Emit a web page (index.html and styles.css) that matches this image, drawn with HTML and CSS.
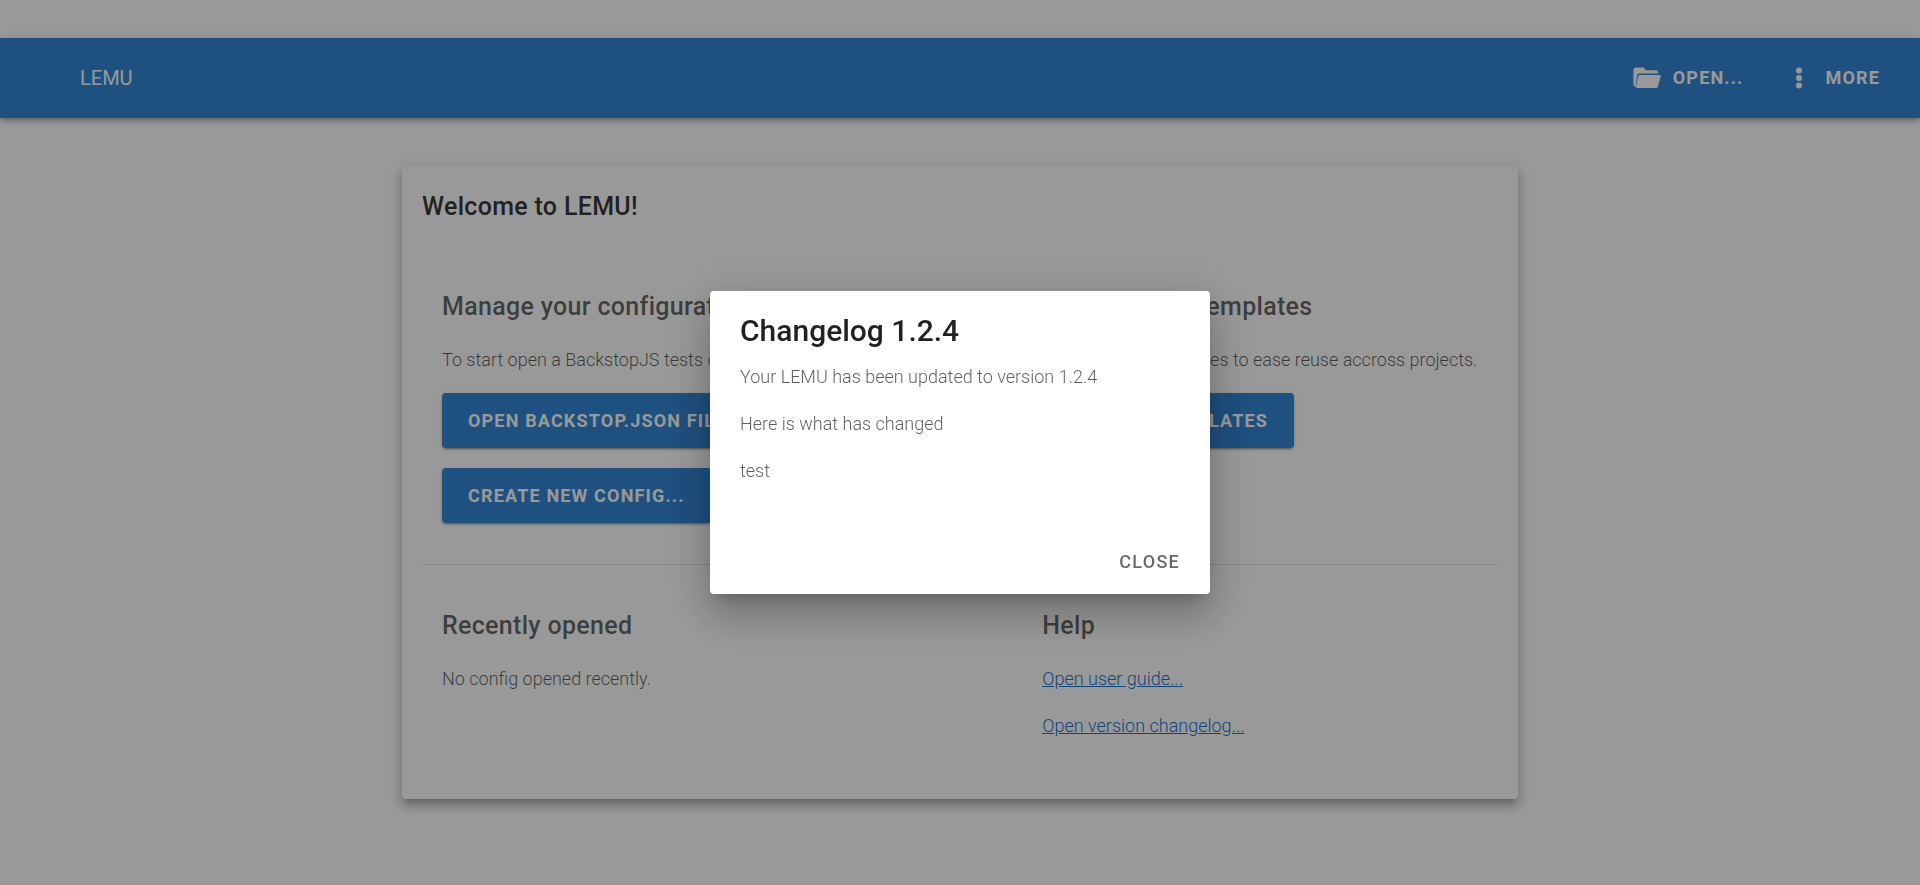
FILE: index.html
```html
<!DOCTYPE html>
<html lang="en">
<head>
<meta charset="utf-8">
<title>LEMU</title>
<link rel="stylesheet" href="styles.css">
</head>
<body>
<header class="toolbar">
  <h1 class="brand">LEMU</h1>
  <nav class="toolbar-actions">
    <button class="tool-button" type="button">
      <svg class="icon" viewBox="0 0 28 28" aria-hidden="true"><g fill="currentColor"><path d="M2.4 3.6H9.6Q11 3.6 11.8 4.8L12.8 6.2H23Q25 6.2 25.2 8.6V9.6H6.4Q4.4 9.6 4 11.6L2.7 23.2Q.6 22.8.4 20.8V5.8Q.5 3.8 2.4 3.6Z"/><path d="M7 11H26.6Q28 11 27.7 12.4L25 22.4Q24.5 24 22.8 24H4.4Q2.9 24 3.1 22.6L5 12.6Q5.4 11 7 11Z"/></g></svg>
      <span>OPEN...</span>
    </button>
    <button class="tool-button" type="button">
      <svg class="icon" viewBox="0 0 28 28" aria-hidden="true"><g fill="currentColor"><circle cx="14" cy="6.5" r="3"/><circle cx="14" cy="14" r="3"/><circle cx="14" cy="21.5" r="3"/></g></svg>
      <span>MORE</span>
    </button>
  </nav>
</header>
<main class="page">
  <section class="card">
    <h2 class="card-title">Welcome to LEMU!</h2>
    <div class="grid grid-top">
      <section class="cell">
        <h3 class="cell-title">Manage your configuration</h3>
        <p class="text">To start open a BackstopJS tests configuration file.</p>
        <div class="buttons">
          <button class="button" type="button">OPEN BACKSTOP.JSON FILE...</button>
          <button class="button" type="button">CREATE NEW CONFIG...</button>
        </div>
      </section>
      <section class="cell">
        <h3 class="cell-title">Manage your templates</h3>
        <p class="text">Manage your templates to ease reuse accross projects.</p>
        <div class="buttons">
          <button class="button" type="button">MANAGE TEMPLATES</button>
        </div>
      </section>
    </div>
    <hr class="divider">
    <div class="grid">
      <section class="cell">
        <h3 class="cell-title">Recently opened</h3>
        <p class="text">No config opened recently.</p>
      </section>
      <section class="cell">
        <h3 class="cell-title">Help</h3>
        <p class="text"><a class="link" href="#guide">Open user guide...</a></p>
        <p class="text"><a class="link" href="#changelog">Open version changelog...</a></p>
      </section>
    </div>
  </section>
</main>
<div class="overlay">
  <div class="dialog" role="dialog" aria-modal="true" aria-labelledby="dialog-title">
    <h2 class="dialog-title" id="dialog-title">Changelog 1.2.4</h2>
    <div class="dialog-body">
      <p class="text">Your LEMU has been updated to version 1.2.4</p>
      <p class="text">Here is what has changed</p>
      <p class="text">test</p>
    </div>
    <div class="dialog-actions">
      <button class="flat-button" type="button">CLOSE</button>
    </div>
  </div>
</div>
</body>
</html>
```
FILE: styles.css
```css
*, *::before, *::after { box-sizing: border-box; }

body {
  margin: 0;
  padding-top: 38px;
  background: #fff;
  color: rgba(0, 0, 0, .87);
  font-family: Roboto, sans-serif;
  font-size: 18px;
  line-height: 27px;
}

h1, h2, h3, p { margin: 0; }

button {
  border: 0;
  background: none;
  font: inherit;
  letter-spacing: .065em;
  cursor: pointer;
}

.toolbar {
  display: flex;
  align-items: center;
  justify-content: space-between;
  height: 80px;
  padding: 0 20px 0 80px;
  background: #3385d5;
  color: #fff;
  box-shadow: 0 2px 4px -1px rgba(0, 0, 0, .2), 0 4px 5px rgba(0, 0, 0, .14), 0 1px 10px rgba(0, 0, 0, .12);
}

.brand { font-size: 20px; font-weight: 400; }

.toolbar-actions { display: flex; gap: 2px; }

.tool-button {
  display: flex;
  align-items: center;
  gap: 12px;
  height: 56px;
  padding: 0 20px;
  color: #fff;
  font-weight: 700;
  line-height: 26px;
}

.icon { width: 28px; height: 28px; }

.page { padding: 48px 16px; }

.card {
  max-width: 1116px;
  margin: 0 auto;
  padding: 20px 20px 40px;
  border-radius: 4px;
  background: #fff;
  box-shadow: 0 5px 5px -3px rgba(0, 0, 0, .2), 0 8px 10px 1px rgba(0, 0, 0, .14), 0 3px 14px 2px rgba(0, 0, 0, .12);
}

.card-title, .cell-title {
  font-size: 25px;
  font-weight: 500;
  line-height: 42px;
  letter-spacing: .0125em;
}

.card-title { color: rgba(0, 0, 0, .8); }

.cell-title { margin-bottom: 18px; color: rgba(0, 0, 0, .6); }

.grid {
  display: grid;
  grid-template-columns: 9fr 7fr;
  column-gap: 40px;
  padding: 40px 20px 0;
}

.grid-top { padding: 58px 20px 41px; }

.cell { min-width: 0; }

.text {
  margin-bottom: 20px;
  color: rgba(0, 0, 0, .64);
  font-weight: 300;
}

.buttons {
  display: flex;
  flex-direction: column;
  align-items: flex-start;
  gap: 20px;
}

.button {
  height: 55px;
  padding: 0 26px;
  border-radius: 4px;
  background: #3385d5;
  color: #fff;
  font-weight: 700;
  box-shadow: 0 3px 1px -2px rgba(0, 0, 0, .2), 0 2px 2px rgba(0, 0, 0, .14), 0 1px 5px rgba(0, 0, 0, .12);
}

.divider {
  height: 1px;
  margin: 0;
  border: 0;
  background: rgba(0, 0, 0, .12);
}

.link { color: #1976d2; }

.overlay {
  position: fixed;
  inset: 0;
  display: flex;
  align-items: center;
  justify-content: center;
  background: rgba(0, 0, 0, .4);
}

.dialog {
  width: 500px;
  max-width: 90%;
  padding: 20px 10px 10px;
  border-radius: 4px;
  background: #fff;
  box-shadow: 0 11px 15px -7px rgba(0, 0, 0, .2), 0 24px 38px 3px rgba(0, 0, 0, .14), 0 9px 46px 8px rgba(0, 0, 0, .12);
}

.dialog-title {
  padding: 0 20px;
  font-size: 30px;
  font-weight: 500;
  line-height: 40px;
}

.dialog-body { padding: 12px 20px 35px; }

.dialog-actions { display: flex; justify-content: flex-end; }

.flat-button {
  height: 45px;
  padding: 0 20px;
  color: rgba(0, 0, 0, .6);
  font-weight: 500;
  letter-spacing: .07em;
}
```
